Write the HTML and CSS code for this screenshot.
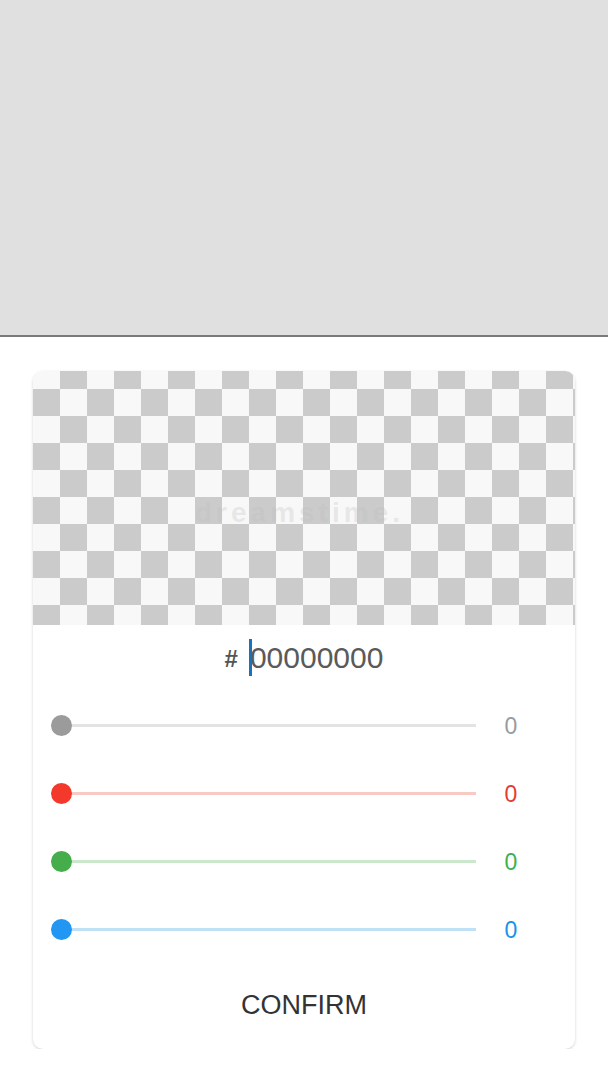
FILE: index.html
```html
<!DOCTYPE html>
<html lang="en">
<head>
    <meta charset="UTF-8">
    <meta name="viewport" content="width=device-width, initial-scale=1.0">
    <title>Color Picker</title>
    <link rel="stylesheet" href="styles.css">
</head>
<body>
    <div class="backdrop"></div>
    <div class="sheet">
        <div class="picker">
            <div class="preview">
                <span class="watermark">dreamstime.</span>
            </div>
            <div class="hex-row">
                <span class="hash">#</span>
                <span class="hex-input"><span class="caret"></span>00000000</span>
            </div>
            <div class="slider-row alpha">
                <div class="track"><span class="thumb"></span></div>
                <span class="value">0</span>
            </div>
            <div class="slider-row red">
                <div class="track"><span class="thumb"></span></div>
                <span class="value">0</span>
            </div>
            <div class="slider-row green">
                <div class="track"><span class="thumb"></span></div>
                <span class="value">0</span>
            </div>
            <div class="slider-row blue">
                <div class="track"><span class="thumb"></span></div>
                <span class="value">0</span>
            </div>
            <button class="confirm">CONFIRM</button>
        </div>
    </div>
</body>
</html>
```

FILE: styles.css
```css
body { margin: 0; padding: 0; background-color: #fff; font-family: "Liberation Sans", Arial, sans-serif; color: #333; }
.backdrop { height: 335px; background-color: #e0e0e0; border-bottom: 2px solid #7a7a7a; }
.sheet { padding: 34px 33px 0 33px; }
.picker { background-color: #fff; border-radius: 10px; box-shadow: 0 1px 3px rgba(0, 0, 0, 0.18); overflow: hidden; }
.preview {
    position: relative;
    height: 254px;
    background-color: #f8f8f8;
    background-image:
        linear-gradient(45deg, #cbcbcb 25%, transparent 25%, transparent 75%, #cbcbcb 75%),
        linear-gradient(45deg, #cbcbcb 25%, transparent 25%, transparent 75%, #cbcbcb 75%);
    background-size: 54px 54px;
    background-position: 0 -9px, 27px 18px;
}
.watermark { position: absolute; left: 162px; top: 126px; font-size: 28px; font-weight: bold; color: rgba(190, 190, 190, 0.3); letter-spacing: 4px; }
.hex-row { display: flex; justify-content: center; align-items: center; gap: 12px; height: 66px; font-size: 30px; }
.hash { font-size: 24px; font-weight: bold; color: #555; padding-top: 2px; }
.hex-input { position: relative; color: #5a5a5a; }
.caret { position: absolute; left: -1px; top: -2px; width: 3px; height: 37px; background-color: #1a73b8; }
.slider-row { display: flex; align-items: center; height: 68px; padding: 0 0 0 18px; }
.track { position: relative; width: 425px; height: 3px; }
.thumb { position: absolute; left: 0; top: -9px; width: 21px; height: 21px; border-radius: 50%; }
.value { width: 70px; text-align: center; font-size: 23px; padding-top: 3px; }
.alpha .track { background-color: #e3e3e3; }
.alpha .thumb { background-color: #9b9b9b; }
.alpha .value { color: #9b9b9b; }
.red .track { background-color: #f7cbc4; }
.red .thumb { background-color: #f2392c; }
.red .value { color: #e53b2f; }
.green .track { background-color: #cbe8cc; }
.green .thumb { background-color: #45ad49; }
.green .value { color: #45ad49; }
.blue .track { background-color: #bfe0f5; }
.blue .thumb { background-color: #2196f3; }
.blue .value { color: #2190e8; }
.confirm { display: block; width: 100%; height: 82px; margin-top: 4px; border: none; background: none; font-family: "Liberation Sans", Arial, sans-serif; font-size: 27px; color: #333; cursor: pointer; padding-bottom: 6px; }
```
